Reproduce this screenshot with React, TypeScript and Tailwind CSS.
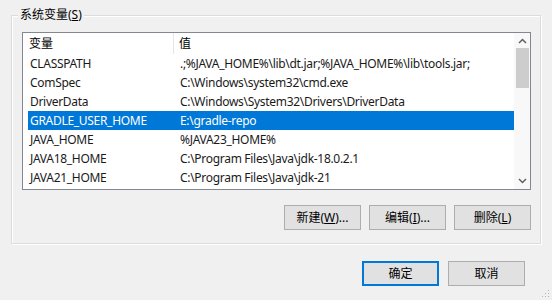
const rows = [
	{ name: "CLASSPATH", value: ".;%JAVA_HOME%\\lib\\dt.jar;%JAVA_HOME%\\lib\\tools.jar;" },
	{ name: "ComSpec", value: "C:\\Windows\\system32\\cmd.exe" },
	{ name: "DriverData", value: "C:\\Windows\\System32\\Drivers\\DriverData" },
	{ name: "GRADLE_USER_HOME", value: "E:\\gradle-repo", selected: true },
	{ name: "JAVA_HOME", value: "%JAVA23_HOME%" },
	{ name: "JAVA18_HOME", value: "C:\\Program Files\\Java\\jdk-18.0.2.1" },
	{ name: "JAVA21_HOME", value: "C:\\Program Files\\Java\\jdk-21" },
];

const font = "font-['Noto_Sans','Noto_Sans_CJK_SC',sans-serif]";

const WinButton = ({
	children,
	primary,
}: {
	children: React.ReactNode;
	primary?: boolean;
}) => (
	<div
		className={`flex items-center justify-center w-[77px] h-[25px] bg-[#e1e1e1] text-[12px] text-black ${
			primary ? "border-2 border-[#0078d7]" : "border border-[#adadad]"
		}`}
	>
		{children}
	</div>
);

const App = () => {
	return (
		<div
			className={`w-[552px] h-[300px] bg-[#f0f0f0] flex flex-col pt-[15px] pl-[11px] ${font} text-[12px] text-black overflow-hidden relative`}
		>
			{/* 系统变量 group */}
			<div className="relative w-[530px] h-[229px] border border-[#dcdcdc] shadow-[inset_1px_1px_0_#fff,1px_1px_0_#fff] flex flex-col px-[10px] pt-[16px]">
				<span className="absolute left-[6px] top-[-10px] px-[2px] bg-[#f0f0f0] leading-[18px]">
					系统变量(<span className="underline">S</span>)
				</span>

				<div className="w-[509px] h-[158px] border border-[#828790] bg-white flex">
					<div className="flex-1 flex flex-col">
						<div className="flex h-[21px] items-center">
							<div className="w-[151px] h-full pl-[6px] flex items-center border-r border-[#e5e5e5]">
								变量
							</div>
							<div className="pl-[5px]">值</div>
						</div>
						{rows.map(({ name, value, selected }) => (
							<div
								key={name}
								className={`flex h-[19px] items-center ml-[5px] tracking-[-0.3px] ${
									selected ? "bg-[#0078d7] text-white" : "text-[#1a1a1a]"
								}`}
							>
								<div className="w-[152px] pl-[2px] whitespace-nowrap">
									{name}
								</div>
								<div className="whitespace-nowrap">{value}</div>
							</div>
						))}
					</div>

					{/* scrollbar */}
					<div className="w-[16px] flex flex-col items-center bg-[#f8f8f8]">
						<div className="h-[15px] w-full flex items-center justify-center">
							<svg width="9" height="6" viewBox="0 0 9 6">
								<path d="M1 5 L4.5 1.5 L8 5" fill="none" stroke="#606060" strokeWidth="1.5" />
							</svg>
						</div>
						<div className="w-[13px] h-[40px] bg-[#cdcdcd]" />
						<div className="flex-1" />
						<div className="h-[17px] w-full flex items-center justify-center">
							<svg width="9" height="6" viewBox="0 0 9 6">
								<path d="M1 1 L4.5 4.5 L8 1" fill="none" stroke="#606060" strokeWidth="1.5" />
							</svg>
						</div>
					</div>
				</div>

				<div className="flex justify-end gap-[8px] mt-[15px] mr-[-1px]">
					<WinButton>
						新建(<span className="underline">W</span>)...
					</WinButton>
					<WinButton>
						编辑(<span className="underline">I</span>)...
					</WinButton>
					<WinButton>
						删除(<span className="underline">L</span>)
					</WinButton>
				</div>
			</div>

			<div className="flex justify-end gap-[9px] mt-[17px] w-[514px]">
				<WinButton primary>确定</WinButton>
				<WinButton>取消</WinButton>
			</div>

			{/* resize grip */}
			<svg className="absolute right-[2px] bottom-[2px]" width="8" height="8" viewBox="0 0 8 8">
				<rect x="6" y="0" width="1" height="1" fill="#b4b4b4" />
				<rect x="3" y="3" width="1" height="1" fill="#b4b4b4" />
				<rect x="6" y="3" width="1" height="1" fill="#b4b4b4" />
				<rect x="0" y="6" width="1" height="1" fill="#b4b4b4" />
				<rect x="3" y="6" width="1" height="1" fill="#b4b4b4" />
				<rect x="6" y="6" width="1" height="1" fill="#b4b4b4" />
			</svg>
		</div>
	);
};

export default App;
